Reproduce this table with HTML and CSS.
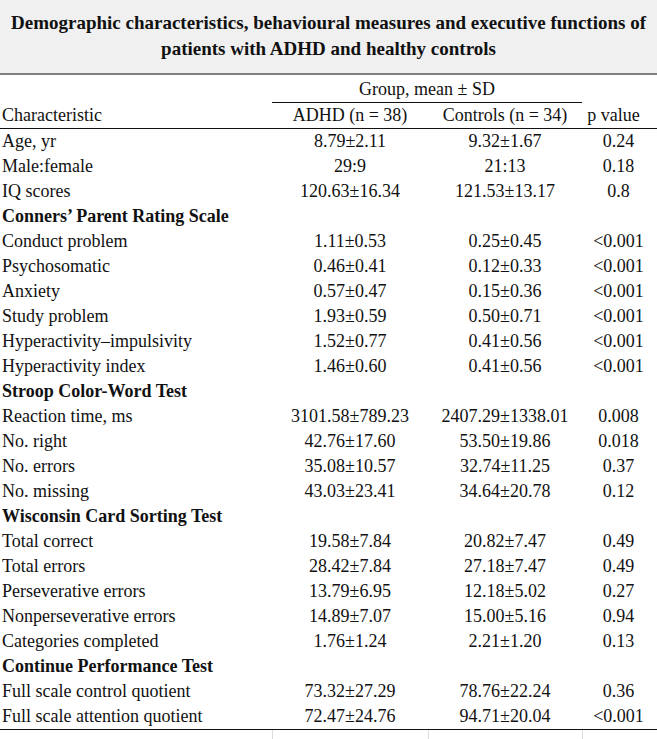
FILE: index.html
```html
<!DOCTYPE html>
<html>
<head>
<meta charset="utf-8">
<link rel="stylesheet" href="styles.css">
</head>
<body>
<div class="caption">
  <div>Demographic characteristics, behavioural measures and executive functions of</div>
  <div>patients with ADHD and healthy controls</div>
</div>
<table class="data">
  <colgroup>
    <col class="c1"><col class="c2"><col class="c3"><col class="c4">
  </colgroup>
  <thead>
    <tr class="group-row">
      <th></th>
      <th colspan="2" class="group">Group, mean ± SD</th>
      <th></th>
    </tr>
    <tr class="head-row">
      <th class="left">Characteristic</th>
      <th>ADHD (n = 38)</th>
      <th>Controls (n = 34)</th>
      <th class="pv">p value</th>
    </tr>
  </thead>
  <tbody>
    <tr><td>Age, yr</td><td>8.79±2.11</td><td>9.32±1.67</td><td>0.24</td></tr>
    <tr><td>Male:female</td><td>29:9</td><td>21:13</td><td>0.18</td></tr>
    <tr><td>IQ scores</td><td>120.63±16.34</td><td>121.53±13.17</td><td>0.8</td></tr>
    <tr class="sec"><td>Conners’ Parent Rating Scale</td><td></td><td></td><td></td></tr>
    <tr><td>Conduct problem</td><td>1.11±0.53</td><td>0.25±0.45</td><td>&lt;0.001</td></tr>
    <tr><td>Psychosomatic</td><td>0.46±0.41</td><td>0.12±0.33</td><td>&lt;0.001</td></tr>
    <tr><td>Anxiety</td><td>0.57±0.47</td><td>0.15±0.36</td><td>&lt;0.001</td></tr>
    <tr><td>Study problem</td><td>1.93±0.59</td><td>0.50±0.71</td><td>&lt;0.001</td></tr>
    <tr><td>Hyperactivity–impulsivity</td><td>1.52±0.77</td><td>0.41±0.56</td><td>&lt;0.001</td></tr>
    <tr><td>Hyperactivity index</td><td>1.46±0.60</td><td>0.41±0.56</td><td>&lt;0.001</td></tr>
    <tr class="sec"><td>Stroop Color-Word Test</td><td></td><td></td><td></td></tr>
    <tr><td>Reaction time, ms</td><td>3101.58±789.23</td><td>2407.29±1338.01</td><td>0.008</td></tr>
    <tr><td>No. right</td><td>42.76±17.60</td><td>53.50±19.86</td><td>0.018</td></tr>
    <tr><td>No. errors</td><td>35.08±10.57</td><td>32.74±11.25</td><td>0.37</td></tr>
    <tr><td>No. missing</td><td>43.03±23.41</td><td>34.64±20.78</td><td>0.12</td></tr>
    <tr class="sec"><td>Wisconsin Card Sorting Test</td><td></td><td></td><td></td></tr>
    <tr><td>Total correct</td><td>19.58±7.84</td><td>20.82±7.47</td><td>0.49</td></tr>
    <tr><td>Total errors</td><td>28.42±7.84</td><td>27.18±7.47</td><td>0.49</td></tr>
    <tr><td>Perseverative errors</td><td>13.79±6.95</td><td>12.18±5.02</td><td>0.27</td></tr>
    <tr><td>Nonperseverative errors</td><td>14.89±7.07</td><td>15.00±5.16</td><td>0.94</td></tr>
    <tr><td>Categories completed</td><td>1.76±1.24</td><td>2.21±1.20</td><td>0.13</td></tr>
    <tr class="sec"><td>Continue Performance Test</td><td></td><td></td><td></td></tr>
    <tr><td>Full scale control quotient</td><td>73.32±27.29</td><td>78.76±22.24</td><td>0.36</td></tr>
    <tr class="last"><td>Full scale attention quotient</td><td>72.47±24.76</td><td>94.71±20.04</td><td>&lt;0.001</td></tr>
    <tr class="tail"><td></td><td></td><td></td><td></td></tr>
  </tbody>
</table>
</body>
</html>
```

FILE: styles.css
```css
html, body {
  margin: 0;
  padding: 0;
  background: #ffffff;
}

body {
  width: 657px;
  height: 739px;
  overflow: hidden;
  font-family: "Liberation Serif", "Times New Roman", serif;
  color: #111111;
}

.caption {
  background: #f0f0f0;
  height: 75px;
  box-sizing: border-box;
  padding-top: 10px;
  border-bottom: 2px solid #808080;
  text-align: center;
  font-weight: bold;
  font-size: 19px;
  line-height: 26px;
  color: #111111;
}

.data {
  width: 657px;
  border-collapse: collapse;
  table-layout: fixed;
  font-size: 18px;
}

.c1 { width: 272px; }
.c2 { width: 156px; }
.c3 { width: 154px; }
.c4 { width: 75px; }

.data th {
  font-weight: normal;
  padding: 0;
  text-align: center;
  white-space: nowrap;
  font-size: 18px;
}

.group-row th {
  height: 25px;
  padding-top: 2px;
  vertical-align: middle;
}

.group-row .group {
  border-bottom: 1px solid #111111;
}

.head-row th {
  height: 25px;
  vertical-align: middle;
  border-bottom: 1px solid #111111;
}

.head-row .left {
  text-align: left;
  padding-left: 2px;
}

.head-row .pv {
  padding-right: 12px;
}

.data td {
  height: 25px;
  padding: 0;
  text-align: center;
  vertical-align: middle;
  white-space: nowrap;
  font-size: 18px;
}

.data td:first-child {
  text-align: left;
  padding-left: 2px;
}

.data td:last-child {
  padding-right: 2px;
}

.data .sec td:first-child {
  font-weight: bold;
}

.data .last td {
  border-bottom: 1px solid #111111;
}

.data .tail td {
  height: 14px;
  border-left: 1px solid #dcdcdc;
}

.data .tail td:first-child {
  border-left: none;
}
```
